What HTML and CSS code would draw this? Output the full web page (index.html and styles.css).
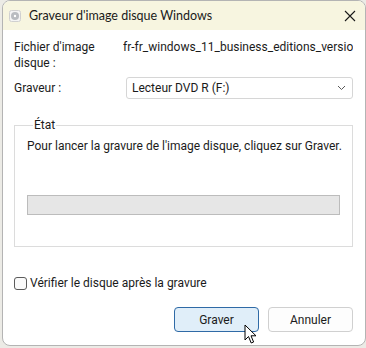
FILE: index.html
```html
<!DOCTYPE html>
<html>
<head>
    <meta charset="UTF-8">
    <title>Graveur d'image disque Windows</title>
    <link rel="stylesheet" href="styles.css">
</head>
<body>
    <div class="window">
        <div class="titlebar">
            <svg class="app-icon" width="12" height="12" viewBox="0 0 12 12">
                <rect x="0.5" y="0.5" width="11" height="11" rx="2" fill="#f4f4f4" stroke="#d0d0d0"/>
                <circle cx="6" cy="6" r="4" fill="#b9bcc0"/>
                <circle cx="6" cy="6" r="1.2" fill="#fff"/>
            </svg>
            <span class="title">Graveur d'image disque Windows</span>
            <svg class="close" width="12" height="12" viewBox="0 0 12 12">
                <path d="M1 1 L11 11 M11 1 L1 11" stroke="#1a1a1a" stroke-width="1.1" fill="none"/>
            </svg>
        </div>

        <div class="content">
            <div class="row file-row">
                <div class="label">Fichier d'image<br>disque :</div>
                <div class="value">fr-fr_windows_11_business_editions_version_23h2_x64_dvd.iso</div>
            </div>
            <div class="row burner-row">
                <div class="label">Graveur :</div>
                <div class="select">
                    <span>Lecteur DVD R (F:)</span>
                    <svg width="9" height="6" viewBox="0 0 9 6">
                        <path d="M1 1 L4.5 4.5 L8 1" stroke="#5a5a5a" stroke-width="1" fill="none"/>
                    </svg>
                </div>
            </div>

            <fieldset class="status">
                <legend>État</legend>
                <p class="status-text">Pour lancer la gravure de l'image disque, cliquez sur Graver.</p>
                <div class="progress"></div>
            </fieldset>

            <label class="check">
                <span class="box"></span>
                Vérifier le disque après la gravure
            </label>

            <div class="buttons">
                <button class="btn primary">Graver</button>
                <button class="btn">Annuler</button>
            </div>
        </div>

        <svg class="cursor" width="14" height="21" viewBox="0 0 14 21">
            <path d="M1 1 L1 16 L4.5 12.5 L7.2 19 L9.6 18 L7 11.8 L12 11.8 Z" fill="#fff" stroke="#000" stroke-width="1" stroke-linejoin="round"/>
        </svg>
    </div>
</body>
</html>
```

FILE: styles.css
```css
body {
    margin: 0;
    background: #ecebe6;
    font-family: Roboto, 'Noto Sans', sans-serif;
    font-size: 12px;
    color: #1b1b1b;
}
.window {
    position: relative;
    box-sizing: border-box;
    width: 364px;
    height: 346px;
    margin-left: 2px;
    border: 1px solid #b4b4b4;
    border-radius: 8px;
    overflow: hidden;
    background: #fff;
    display: flex;
    flex-direction: column;
}
.titlebar {
    height: 29px;
    flex-shrink: 0;
    background: #f7f5e0;
    display: flex;
    align-items: center;
    padding: 0 9px 0 6px;
    gap: 8px;
    font-family: Lato, sans-serif;
    font-size: 12.5px;
}
.title {
    flex: 1;
    color: #1a1a1a;
}
.content {
    flex: 1;
    padding: 9px 12px 0 11px;
    display: flex;
    flex-direction: column;
}
.row {
    display: grid;
    grid-template-columns: 109px 1fr;
}
.label {
    line-height: 16px;
}
.value {
    white-space: nowrap;
    overflow: hidden;
    line-height: 16px;
}
.burner-row {
    margin-top: 6px;
    align-items: start;
}
.burner-row .label {
    margin-top: 3px;
}
.select {
    margin-left: 3px;
    height: 22px;
    box-sizing: border-box;
    border: 1px solid #d6d6d6;
    border-radius: 3px;
    display: flex;
    align-items: center;
    justify-content: space-between;
    padding: 0 6px 0 5px;
}
.status {
    margin: 19px 0 0 0;
    padding: 6px 12px 12px 12px;
    border: 1px solid #dcdcdc;
    height: 129px;
    box-sizing: border-box;
}
.status legend {
    padding: 0 1px;
    margin-left: 6px;
    line-height: 14px;
}
.status-text {
    margin: 0 -12px 0 0;
    line-height: 16px;
    white-space: nowrap;
}
.progress {
    margin-top: 41px;
    height: 20px;
    box-sizing: border-box;
    border: 1px solid #bcbcbc;
    background: #e6e6e6;
}
.check {
    margin-top: 29px;
    display: flex;
    align-items: center;
    gap: 3px;
}
.box {
    width: 11px;
    height: 11px;
    border: 1px solid #5b5b5b;
    border-radius: 3px;
    background: #fafafa;
}
.buttons {
    margin-top: 17px;
    display: flex;
    justify-content: flex-end;
    gap: 9px;
}
.btn {
    width: 85px;
    height: 25px;
    font-family: inherit;
    font-size: 12px;
    color: #1b1b1b;
    background: #fdfdfd;
    border: 1px solid #d0d0d0;
    border-radius: 4px;
}
.btn.primary {
    background: #e0eef9;
    border: 1px solid #2f6aa6;
}
.cursor {
    position: absolute;
    left: 241px;
    top: 323px;
}
```
